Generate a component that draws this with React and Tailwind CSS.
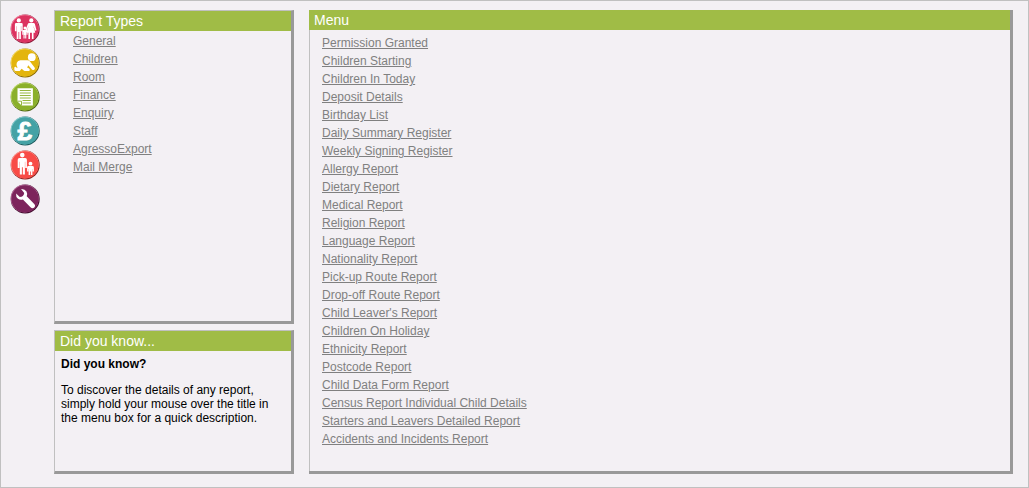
import React from 'react';

const REPORT_TYPES = [
  'General',
  'Children',
  'Room',
  'Finance',
  'Enquiry',
  'Staff',
  'AgressoExport',
  'Mail Merge',
];

const MENU_ITEMS = [
  'Permission Granted',
  'Children Starting',
  'Children In Today',
  'Deposit Details',
  'Birthday List',
  'Daily Summary Register',
  'Weekly Signing Register',
  'Allergy Report',
  'Dietary Report',
  'Medical Report',
  'Religion Report',
  'Language Report',
  'Nationality Report',
  'Pick-up Route Report',
  'Drop-off Route Report',
  "Child Leaver's Report",
  'Children On Holiday',
  'Ethnicity Report',
  'Postcode Report',
  'Child Data Form Report',
  'Census Report Individual Child Details',
  'Starters and Leavers Detailed Report',
  'Accidents and Incidents Report',
];

// All drawings use a 30x30 box with the disc centred on 15,15
const NAV_ICONS = [
  {
    name: 'Families',
    color: '#dc3360',
    dark: '#8a1838',
    light: '#f58aa5',
    art: (
      <>
        <circle cx="8.8" cy="6.4" r="2.1" />
        <path d="M6.2 9h5.2q1.3 0 1.3 1.3v6.9h-1.5v-4.9h-.3V25H9.2v-7h-.7v7H6.7V12.3h-.3v4.9H4.9v-6.9Q4.9 9 6.2 9z" />
        <circle cx="21.3" cy="6.4" r="2.1" />
        <path d="M19.1 9h4.5q1 0 1.3 1l1.6 6.2-1.5.5-1.3-4.3h-.2l1.8 6.3h-1.8V25h-1.6v-6.3H20V25h-1.6v-6.3h-1.8l1.8-6.3h-.2l-1.3 4.3-1.5-.5L17.8 10q.3-1 1.3-1z" />
        <circle cx="15" cy="14" r="1.5" />
        <path d="M13.4 16h3.2q1 0 1 1v3.7h-1V18h-.3v6.5h-1.1v-3.4h-.6v3.4h-1.1V18h-.2v2.7h-1V17q0-1 1.1-1z" />
      </>
    ),
  },
  {
    name: 'Children',
    color: '#e3b50d',
    dark: '#8c6c00',
    light: '#f8df70',
    art: (
      <>
        <circle cx="21.8" cy="9.2" r="3.9" />
        <path d="M10.4 12.2h7q1.6 0 2.6 1.4l4.6 6q.9 1.3-.4 2.2-1.3.7-2.3-.4l-3.6-4.2-1.2 2.2 2 1.2q1.1.9.5 1.8-.3.5-1.2.5h-3.7q-1.2-.1-1.7-1.1l-1.5-1-1.3 1.7q-.5.6-1.4.6H6q-1.7 0-1.7-1.6V20q0-1.3 1.1-1.3.9 0 1.1 1h1.1q-1.8-2.4-.8-5 .9-2.4 3.6-2.5z" />
      </>
    ),
  },
  {
    name: 'Reports',
    color: '#8bb02b',
    dark: '#4c6410',
    light: '#c4df75',
    art: (
      <>
        <path d="M7.5 6.2h15.4v17.2H11.6l-4.1-4z" />
        <g stroke="#8bb02b" strokeWidth="0.9" fill="none">
          <path d="M9.8 8.5h11M9.8 11h11M9.8 13.5h11M9.8 16h11M12.5 18.5h8.3M12.5 21h8.3" />
          <path d="M7.5 19.2h4v4.2" />
        </g>
      </>
    ),
  },
  {
    name: 'Finance',
    color: '#44a2a5',
    dark: '#1c5b5e',
    light: '#8fd0d2',
    art: (
      <text
        x="14.7"
        y="23.9"
        textAnchor="middle"
        stroke="#fff"
        strokeWidth="0.9"
        className="font-['Liberation_Sans',Arial,sans-serif] text-[26px] font-bold"
      >
        £
      </text>
    ),
  },
  {
    name: 'Enquiries',
    color: '#f84c47',
    dark: '#8d211e',
    light: '#ffa29c',
    art: (
      <>
        <circle cx="12.3" cy="5.1" r="2.3" />
        <path d="M9.5 8.1h5.6q1.8 0 1.8 1.7v8.3h-1.7v-6.3h-.3v12.8h-2.1v-7.4h-.9v7.4H9.8V11.8h-.3v6.3H7.7V9.8q0-1.7 1.8-1.7z" />
        <circle cx="20.5" cy="13.7" r="1.9" />
        <path d="M18.7 16.1h3.6q1.6 0 1.6 1.4v3.9h-1.3v-2.5h-.2v6h-1.5v-3.3h-.8v3.3h-1.5v-6h-.2v2.5h-1.3v-3.9q0-1.4 1.6-1.4z" />
      </>
    ),
  },
  {
    name: 'Settings',
    color: '#7d245c',
    dark: '#420c2e',
    light: '#b8719d',
    art: (
      <path d="M11.1 5q3.7-.3 5.4 2.6 1.2 2.2.2 4.6l7.3 7.5q2 1.9.3 3.7-1.9 1.6-3.8-.2l-7.6-7.7q-2.7.9-4.9-.7-2.3-1.7-1.9-5.3l3.7 3.4q3.9-.2 4.4-4z" />
    ),
  },
];

function NavIcon({ icon }) {
  return (
    <a href="#" aria-label={icon.name} className="block h-[30px] w-[30px]">
      <svg viewBox="0 0 30 30" className="block h-[30px] w-[30px]">
        <circle cx="15.2" cy="15" r="14.5" fill={icon.dark} />
        <circle cx="14.7" cy="14.4" r="14" fill={icon.light} />
        <circle cx="15" cy="14.8" r="13.6" fill={icon.color} />
        <g fill="#fff">{icon.art}</g>
      </svg>
    </a>
  );
}

function LinkList({ items }) {
  return (
    <ul>
      {items.map((item) => (
        <li key={item} className="h-[18px] leading-[18px]">
          <a href="#" className="text-[#808080] underline">
            {item}
          </a>
        </li>
      ))}
    </ul>
  );
}

export default function App() {
  return (
    <div className="flex h-[488px] w-[1029px] border border-[#c0c0c0] bg-[#f3f0f4] pt-[9px] pl-[9px] font-['Liberation_Sans',Arial,sans-serif] text-xs text-black">
      <nav className="flex w-[44px] flex-col gap-1 pt-1">
        {NAV_ICONS.map((icon) => (
          <NavIcon key={icon.name} icon={icon} />
        ))}
      </nav>

      <div className="flex w-[240px] flex-col gap-1.5">
        <section className="h-[314px] border-t border-r-[3px] border-b-[3px] border-l border-t-[#c0c0c0] border-r-[#999] border-b-[#999] border-l-[#c0c0c0]">
          <h2 className="h-5 bg-[#a0bc46] pl-[5px] text-sm leading-5 text-white">Report Types</h2>
          <div className="pt-px pl-[18px]">
            <LinkList items={REPORT_TYPES} />
          </div>
        </section>

        <section className="h-[144px] border-t border-r-[3px] border-b-[3px] border-l border-t-[#c0c0c0] border-r-[#999] border-b-[#999] border-l-[#c0c0c0]">
          <h2 className="h-5 bg-[#a0bc46] pl-[5px] text-sm leading-5 text-white">Did you know...</h2>
          <div className="px-1.5 pt-1.5 leading-[14px]">
            <p className="mb-3 font-bold">Did you know?</p>
            <p>
              To discover the details of any report,
              <br />
              simply hold your mouse over the title in
              <br />
              the menu box for a quick description.
            </p>
          </div>
        </section>
      </div>

      <section className="ml-[15px] h-[464px] w-[704px] border-r-[3px] border-b-[3px] border-r-[#999] border-b-[#999]">
        <h2 className="h-5 bg-[#a0bc46] pl-[5px] text-sm leading-5 text-white">Menu</h2>
        <div className="h-[441px] border-l border-[#c0c0c0] pt-1 pl-3">
          <LinkList items={MENU_ITEMS} />
        </div>
      </section>
    </div>
  );
}
